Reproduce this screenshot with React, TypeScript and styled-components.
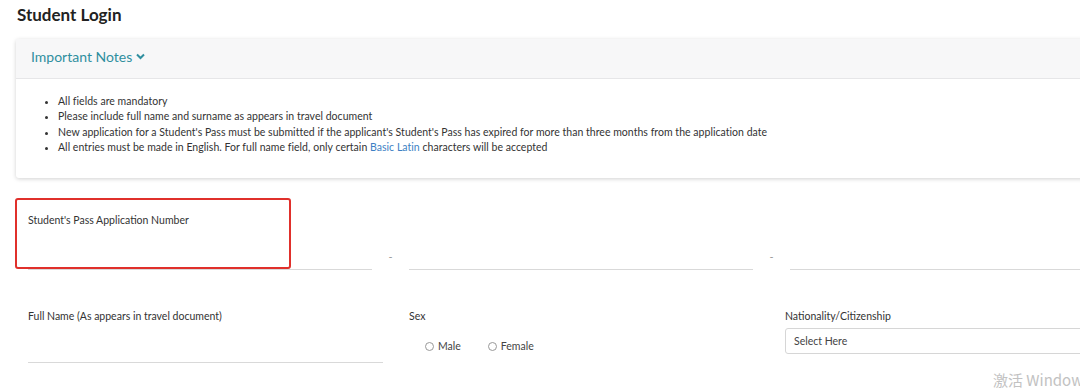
import styled, { createGlobalStyle } from 'styled-components';

const GlobalStyle = createGlobalStyle`
  html, body {
    margin: 0;
    padding: 0;
    background: #ffffff;
    overflow: hidden;
  }
  body {
    font-family: Lato, "Open Sans", Arial, sans-serif;
    color: #333;
  }
`;

const Page = styled.div`
  position: relative;
  width: 1120px;
  height: 392px;
  padding: 3px 0 0 17px;
  box-sizing: border-box;
`;

const Title = styled.h1`
  margin: 0;
  font-size: 17px;
  font-weight: 700;
  color: #222;
  line-height: 24px;
`;

const Card = styled.div`
  margin: 12px 0 0 -1px;
  width: 1110px;
  background: #fff;
  box-shadow: 0 1px 4px rgba(0, 0, 0, 0.18);
  border-radius: 3px;
`;

const CardHeader = styled.div`
  height: 40px;
  box-sizing: border-box;
  display: flex;
  align-items: flex-start;
  padding: 9px 0 0 15px;
  background: #f7f7f8;
  border-bottom: 1px solid #e6e6e8;
  color: #2f8f9f;
  font-size: 14px;
  line-height: 17px;
  gap: 4px;

  svg {
    margin-top: 5px;
  }
`;

const Notes = styled.ul`
  margin: 0;
  padding: 15px 0 23px 42px;
  font-size: 10.5px;
  letter-spacing: 0.03px;
  line-height: 15.3px;
  color: #333;
`;

const Link = styled.a`
  color: #3d7fc4;
  text-decoration: none;
`;

const Form = styled.div`
  display: flex;
  flex-direction: column;
  padding: 35px 0 0 11px;
`;

const AppRow = styled.div`
  display: flex;
  align-items: flex-end;
`;

const Field = styled.div<{ $width: number }>`
  width: ${p => p.$width}px;
  flex-shrink: 0;
  display: flex;
  flex-direction: column;
`;

const Label = styled.div`
  font-size: 10.5px;
  color: #333;
  line-height: 14px;
`;

const Underline = styled.div<{ $height: number }>`
  height: ${p => p.$height}px;
  border-bottom: 1px solid #d9d9d9;
`;

const Dash = styled.div`
  width: 37px;
  flex-shrink: 0;
  text-align: center;
  font-size: 11px;
  color: #999;
  padding-bottom: 7px;
`;

const DetailRow = styled.div`
  display: flex;
  gap: 26px;
  margin-top: 39px;
`;

const RadioGroup = styled.div`
  display: flex;
  gap: 27px;
  padding: 17px 0 0 16px;
`;

const RadioOption = styled.label`
  display: flex;
  align-items: center;
  gap: 4px;
  font-size: 10.5px;
  color: #444;
`;

const RadioCircle = styled.span`
  width: 7px;
  height: 7px;
  border: 1px solid #999;
  border-radius: 50%;
`;

const Select = styled.div`
  margin-top: 5px;
  height: 26px;
  box-sizing: border-box;
  border: 1px solid #d6d6d6;
  border-radius: 3px;
  padding: 0 8px;
  display: flex;
  align-items: center;
  font-size: 10.5px;
  color: #444;
`;

const Highlight = styled.div`
  position: absolute;
  left: 15px;
  top: 198px;
  width: 276px;
  height: 71px;
  box-sizing: border-box;
  border: 2px solid #e0302b;
  border-radius: 3px;
`;

const Watermark = styled.div`
  position: absolute;
  left: 993px;
  top: 369px;
  font-family: "Noto Sans CJK SC", "Open Sans", sans-serif;
  font-size: 15px;
  color: #c2c2c2;
  white-space: nowrap;
`;

function Chevron() {
  return (
    <svg width="9" height="7" viewBox="0 0 9 7">
      <path d="M1 1.5 L4.5 5 L8 1.5" fill="none" stroke="#2f8f9f" strokeWidth="2" />
    </svg>
  );
}

export default function App() {
  return (
    <>
      <GlobalStyle />
      <Page>
        <Title>Student Login</Title>
        <Card>
          <CardHeader>
            Important Notes <Chevron />
          </CardHeader>
          <Notes>
            <li>All fields are mandatory</li>
            <li>Please include full name and surname as appears in travel document</li>
            <li>New application for a Student's Pass must be submitted if the applicant's Student's Pass has expired for more than three months from the application date</li>
            <li>All entries must be made in English. For full name field, only certain <Link>Basic Latin</Link> characters will be accepted</li>
          </Notes>
        </Card>
        <Form>
          <AppRow>
            <Field $width={344}>
              <Label>Student's Pass Application Number</Label>
              <Underline $height={42} />
            </Field>
            <Dash>-</Dash>
            <Field $width={344}>
              <Underline $height={56} />
            </Field>
            <Dash>-</Dash>
            <Field $width={344}>
              <Underline $height={56} />
            </Field>
          </AppRow>
          <DetailRow>
            <Field $width={355}>
              <Label>Full Name (As appears in travel document)</Label>
              <Underline $height={39} />
            </Field>
            <Field $width={350}>
              <Label>Sex</Label>
              <RadioGroup>
                <RadioOption><RadioCircle />Male</RadioOption>
                <RadioOption><RadioCircle />Female</RadioOption>
              </RadioGroup>
            </Field>
            <Field $width={310}>
              <Label>Nationality/Citizenship</Label>
              <Select>Select Here</Select>
            </Field>
          </DetailRow>
        </Form>
        <Highlight />
        <Watermark>激活 Windows</Watermark>
      </Page>
    </>
  );
}
